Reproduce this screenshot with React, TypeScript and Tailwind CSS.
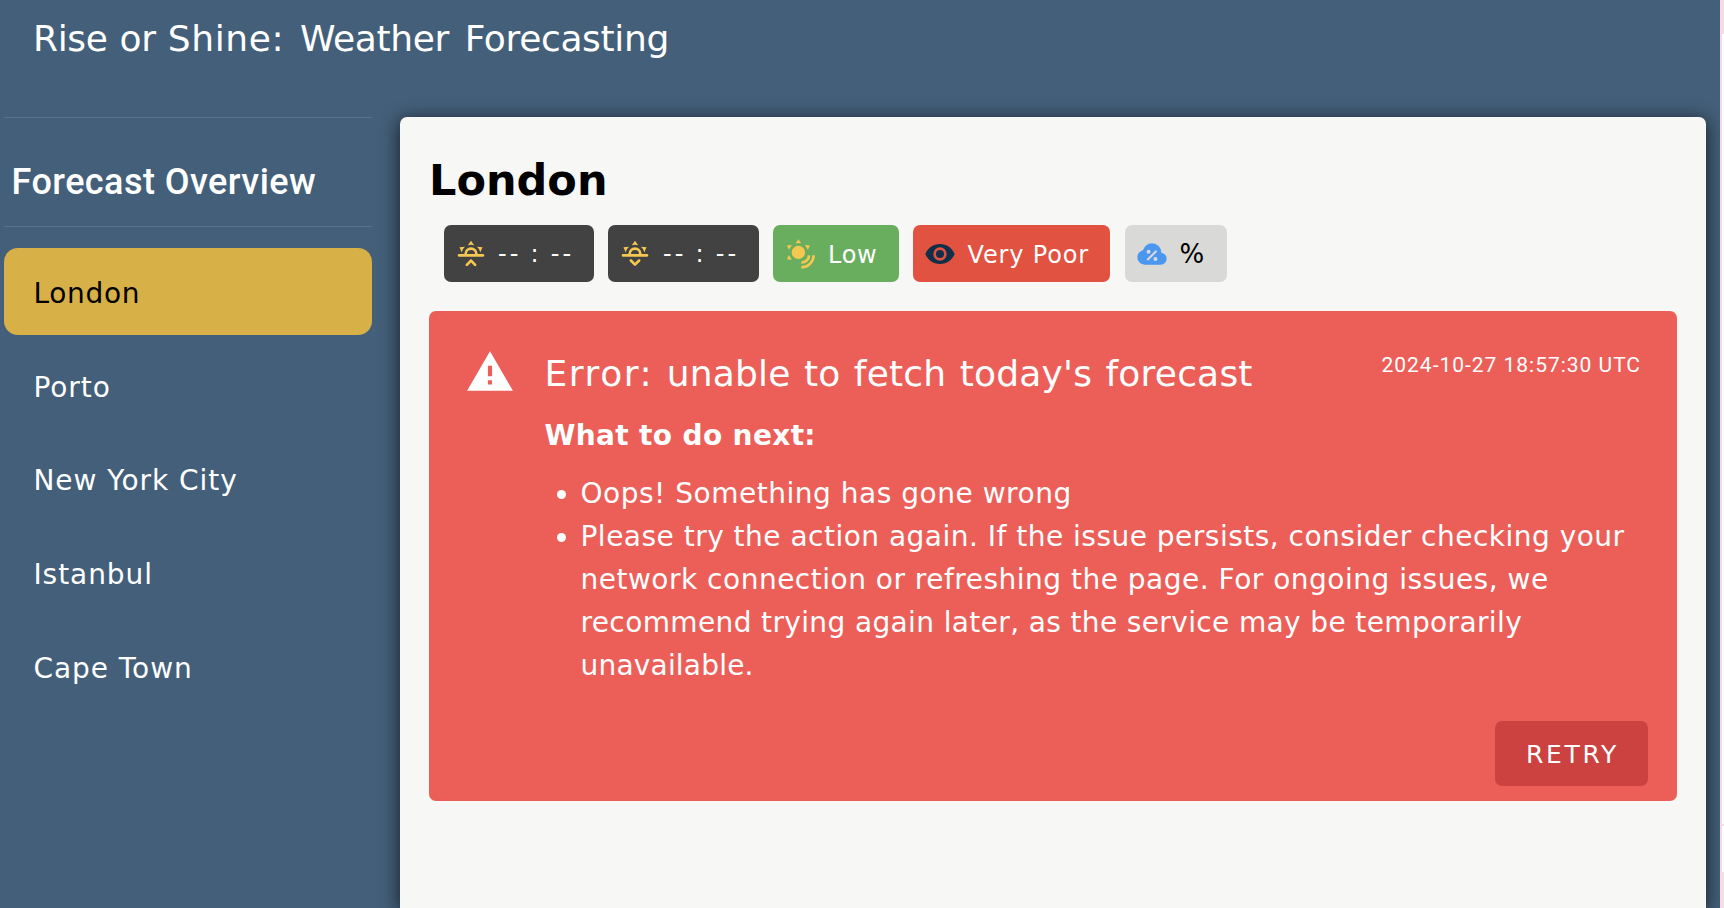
import React from "react";

const RISE_BASE =
  "M3,12H7A5,5 0 0,1 12,7A5,5 0 0,1 17,12H21A1,1 0 0,1 22,13A1,1 0 0,1 21,14H3A1,1 0 0,1 2,13A1,1 0 0,1 3,12M15,12A3,3 0 0,0 12,9A3,3 0 0,0 9,12H15M12,2L14.39,5.42C13.65,5.15 12.84,5 12,5C11.16,5 10.35,5.15 9.61,5.42L12,2M3.34,7L7.5,6.65C6.9,7.16 6.36,7.78 5.94,8.5C5.5,9.24 5.25,10 5.11,10.79L3.34,7M20.65,7L18.88,10.79C18.74,10 18.47,9.23 18.05,8.5C17.63,7.78 17.1,7.15 16.5,6.64L20.65,7";

const icons = {
  sunrise:
    RISE_BASE +
    "M12.71,16.3L15.82,19.41C16.21,19.8 16.21,20.43 15.82,20.82C15.43,21.21 14.8,21.21 14.41,20.82L12,18.41L9.59,20.82C9.2,21.21 8.57,21.21 8.18,20.82C7.79,20.43 7.79,19.8 8.18,19.41L11.29,16.3C11.5,16.1 11.74,16 12,16C12.26,16 12.5,16.1 12.71,16.3Z",
  sunset:
    RISE_BASE +
    "M12.71,20.71L15.82,17.6C16.21,17.21 16.21,16.57 15.82,16.18C15.43,15.79 14.8,15.79 14.41,16.18L12,18.59L9.59,16.18C9.2,15.79 8.57,15.79 8.18,16.18C7.79,16.57 7.79,17.21 8.18,17.6L11.29,20.71C11.5,20.9 11.74,21 12,21C12.26,21 12.5,20.9 12.71,20.71Z",
  eye: "M12,9A3,3 0 0,0 9,12A3,3 0 0,0 12,15A3,3 0 0,0 15,12A3,3 0 0,0 12,9M12,17A5,5 0 0,1 7,12A5,5 0 0,1 12,7A5,5 0 0,1 17,12A5,5 0 0,1 12,17M12,4.5C7,4.5 2.73,7.61 1,12C2.73,16.39 7,19.5 12,19.5C17,19.5 21.27,16.39 23,12C21.27,7.61 17,4.5 12,4.5Z",
  alert: "M13 14H11V9H13M13 18H11V16H13M1 21H23L12 2Z",
};

function Icon({ d, className }: { d: string; className: string }) {
  return (
    <svg viewBox="0 0 24 24" className={className} fill="currentColor">
      <path d={d} />
    </svg>
  );
}

function UvIcon() {
  return (
    <svg viewBox="0 0 24 24" className="size-8 shrink-0 text-[#f6c851]" fill="currentColor">
      <circle cx="10.8" cy="10.8" r="5" />
      <path d="M10.8 1 12.9 4H8.7ZM2.2 5.6 5.9 5.3 3.7 8.9ZM19.4 5.6 15.7 5.3 17.9 8.9ZM2.2 16 3.7 12.7 5.9 16.3Z" />
      <path d="M18.8 13A5.6 5.6 0 0 1 13 18.4M22.2 13A9.1 9.1 0 0 1 13 22" fill="none" stroke="currentColor" strokeWidth="2" />
    </svg>
  );
}

function CloudPercentIcon() {
  return (
    <svg viewBox="0 0 24 24" className="size-8 shrink-0 text-[#4b96ee]" fill="currentColor">
      <path d="M6.5 20Q4.22 20 2.61 18.43 1 16.85 1 14.58 1 12.63 2.17 11.1 3.35 9.57 5.25 9.15 5.88 6.85 7.75 5.43 9.63 4 12 4 14.93 4 16.96 6.04 19 8.07 19 11 20.73 11.2 21.86 12.5 23 13.78 23 15.5 23 17.38 21.69 18.69 20.38 20 18.5 20Z" />
      <g className="text-[#d9d9d8]">
        <path d="M8.5 16.5 15.4 9.6" stroke="currentColor" strokeWidth="1.6" />
        <circle cx="9.4" cy="10.4" r="1.5" />
        <circle cx="14.6" cy="15.7" r="1.5" />
      </g>
    </svg>
  );
}

const cities = ["London", "Porto", "New York City", "Istanbul", "Cape Town"];

export default function App() {
  return (
    <div className="flex h-[908px] w-[1724px] overflow-hidden bg-white font-['DejaVu_Sans',Verdana,sans-serif]">
      <div className="flex h-full w-[1720px] shrink-0 flex-col bg-[#445f79] text-white">
        <header className="h-[117px] shrink-0 pt-[13px] pl-[33px]">
          <h1 className="text-[36px] leading-[52px] tracking-[-0.35px] whitespace-nowrap [word-spacing:4.6px]">
            <span className="[word-spacing:1px]">Rise or </span>
            <span className="tracking-[0.6px]">Shine:</span> Weather Forecasting
          </h1>
        </header>
        <div className="flex min-h-0 flex-1 pl-1">
          <aside className="w-[368px] shrink-0">
            <div className="flex h-[110px] items-center border-y border-[#5b728a] pt-[19px] pl-[7.5px]">
              <h2 className="font-['Roboto',sans-serif] text-[36px] leading-[44px] font-medium tracking-[0.45px] whitespace-nowrap">Forecast Overview</h2>
            </div>
            <nav className="flex flex-col gap-[6px] pt-[21px]">
              {cities.map((city, i) => (
                <button
                  key={city}
                  className={
                    i === 0
                      ? "flex h-[87px] items-center rounded-[14px] bg-[#d7b147] pt-1 pl-[29.4px] text-left text-[28px] tracking-[0.7px] text-black"
                      : "flex h-[87.6px] items-center rounded-[14px] pt-[6px] pl-[29.4px] text-left text-[28px] tracking-[0.95px]"
                  }
                >
                  {city}
                </button>
              ))}
            </nav>
          </aside>
          <main className="ml-7 w-[1306px] rounded-t-[7px] bg-[#f7f7f5] px-[29px] shadow-[0_3px_18px_1px_rgba(0,0,0,0.65)]">
            <h2 className="h-[90px] pt-[35px] text-[43px] leading-[56px] font-bold text-black">London</h2>
            <div className="mt-[18px] ml-[15px] flex h-[57px] gap-[14px] text-[24px]">
              <div className="flex w-[150px] items-center gap-[11px] rounded-[7px] bg-[#424242] pl-[11px]">
                <Icon d={icons.sunrise} className="size-8 shrink-0 text-[#f6c851]" />
                <span className="pt-px tracking-[3.2px] whitespace-nowrap [word-spacing:-2px]">-- : --</span>
              </div>
              <div className="flex w-[151px] items-center gap-3 rounded-[7px] bg-[#424242] pl-[11px]">
                <Icon d={icons.sunset} className="size-8 shrink-0 text-[#f6c851]" />
                <span className="pt-px tracking-[3.2px] whitespace-nowrap [word-spacing:-2px]">-- : --</span>
              </div>
              <div className="flex w-[126px] items-center gap-3 rounded-[7px] bg-[#69ae5e] pl-[11px]">
                <UvIcon />
                <span className="pt-[2px] tracking-[0.7px]">Low</span>
              </div>
              <div className="flex w-[197px] items-center gap-[11.5px] rounded-[7px] bg-[#e15241] pl-[11px]">
                <Icon d={icons.eye} className="size-8 shrink-0 text-[#122f49]" />
                <span className="pt-[2px] tracking-[0.85px] whitespace-nowrap">Very Poor</span>
              </div>
              <div className="ml-px flex w-[102px] items-center gap-3 rounded-[7px] bg-[#d9d9d8] pl-[10.5px] text-black">
                <CloudPercentIcon />
                <span className="pt-[2px] text-[26px]">%</span>
              </div>
            </div>
            <section className="mt-[29px] flex h-[490px] rounded-[7px] bg-[#ec5f59]">
              <Icon d={icons.alert} className="mt-[36px] ml-[36px] size-[50px] shrink-0" />
              <div className="ml-[30px] flex flex-1 flex-col">
                <div className="flex justify-between pt-[38px] pr-[36px]">
                  <h3 className="-ml-[0.5px] text-[36px] leading-[50px] tracking-[0.2px] whitespace-nowrap [word-spacing:1.7px]">
                    <span className="tracking-[1.6px]">Error:</span> unable to fetch today's forecast
                  </h3>
                  <time className="font-['Roboto',sans-serif] text-[21px] leading-[32px] tracking-[0.98px] whitespace-nowrap">2024-10-27 18:57:30 UTC</time>
                </div>
                <p className="mt-[15px] -ml-[0.5px] text-[28px] leading-[43px] font-bold tracking-[0.35px]">What to do next:</p>
                <ul className="mt-[15px] list-disc pl-[35.5px] text-[28px] leading-[43px] tracking-[0.52px] whitespace-nowrap">
                  <li>Oops! Something has gone wrong</li>
                  <li>
                    <span className="tracking-[0.49px]">Please try the action again. If the issue persists, consider checking your</span><br />
                    <span className="tracking-[0.5px]">network connection or refreshing the page. For ongoing issues, we</span><br />
                    <span className="tracking-[0.37px]">recommend trying again later, as the service may be temporarily</span><br />
                    <span className="tracking-[0.2px]">unavailable.</span>
                  </li>
                </ul>
                <button className="mt-[34px] mr-[29px] h-[65px] w-[153px] self-end rounded-[7px] bg-[#cc4240] pt-[3px] pl-[2px] text-[25px] tracking-[2.7px]">RETRY</button>
              </div>
            </section>
          </main>
        </div>
      </div>
      <div className="flex w-1 flex-col border-l-2 border-[#fad9e0]">
        <div className="h-[34px] bg-[#f3dfe3]" />
        <div className="h-[790px] bg-white" />
        <div className="h-[2px] bg-[#f3dfe3]" />
        <div className="h-[46px] bg-white" />
        <div className="flex-1 bg-[#f1e2e5]" />
      </div>
    </div>
  );
}
